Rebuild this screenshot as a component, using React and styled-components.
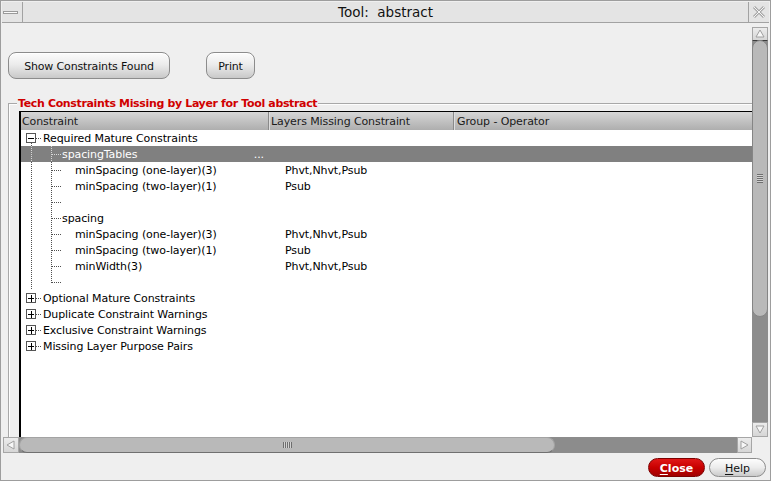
import styled, { createGlobalStyle } from 'styled-components';

// ======================
// global
// ======================
const Global = createGlobalStyle`
    body { margin: 0; background: #efefef; }
`;

const FONT = `"DejaVu Sans", "Liberation Sans", sans-serif`;

// ======================
// window frame
// ======================
const Window = styled.div`
    width: 771px;
    height: 481px;
    box-sizing: border-box;
    border: 1px solid #9d9d9d;
    padding: 1px;
    background: #efefef;
    display: flex;
    flex-direction: column;
    font-family: ${FONT};
    font-size: 11px;
    letter-spacing: -0.1px;
    color: #000;
`;

const TitleBar = styled.div`
    height: 20px;
    flex: none;
    display: flex;
    align-items: center;
    background: #e4e4e4;
    border-bottom: 1px solid #a2a2a2;
`;

const MinBox = styled.div`
    width: 21px;
    height: 20px;
    box-sizing: border-box;
    border-right: 1px solid #a2a2a2;
    display: flex;
    align-items: center;
    padding-left: 1px;

    &::after {
        content: '';
        width: 13px;
        height: 1px;
        border: 1px solid #9a9a9a;
        background: #fafafa;
    }
`;

const TitleText = styled.div`
    flex: 1;
    text-align: center;
    font-size: 13.5px;
    letter-spacing: 0;
    white-space: pre;
    color: #111;
`;

const CloseBox = styled.div`
    width: 21px;
    height: 20px;
    box-sizing: border-box;
    border-left: 1px solid #a2a2a2;
    display: flex;
    align-items: center;
    justify-content: center;
`;

// ======================
// main area
// ======================
const Main = styled.div`
    flex: 1;
    min-height: 0;
    display: flex;
`;

const LeftCol = styled.div`
    flex: 1;
    display: flex;
    flex-direction: column;
`;

const RightCol = styled.div`
    width: 16px;
    margin-right: 1px;
    padding-top: 4px;
    display: flex;
    flex-direction: column;
`;

const ButtonRow = styled.div`
    display: flex;
    gap: 36px;
    padding: 29px 0 0 6px;
`;

const PushButton = styled.button`
    width: ${p => p.$w}px;
    height: 27px;
    padding: 2px 0 0;
    border: 1px solid #8c8c8c;
    border-radius: 8px;
    background: linear-gradient(#fcfcfc 0%, #ececec 45%, #c9c9c9 100%);
    box-shadow: inset 0 1px 0 #fff;
    font-family: ${FONT};
    font-size: 11px;
    letter-spacing: -0.15px;
    color: #111;
`;

const GroupBox = styled.div`
    flex: 1;
    min-height: 0;
    margin: 24px 0 0 6px;
    padding: 7px 0 0 10px;
    border-top: 1px solid #a8a8a8;
    border-left: 1px solid #a8a8a8;
    box-shadow: inset 1px 1px 0 #fdfdfd;
    position: relative;
    display: flex;
    flex-direction: column;
`;

const Legend = styled.div`
    position: absolute;
    top: -7px;
    left: 8px;
    padding: 0 1px;
    line-height: 13px;
    background: #efefef;
    color: #d00000;
    font-weight: bold;
    font-size: 11px;
    letter-spacing: -0.35px;
`;

// ======================
// table
// ======================
const COLS = '247px 185px 1fr';

const Table = styled.div`
    flex: 1;
    background: #fff;
    border-top: 1px solid #000;
    border-left: 2px solid #000;
    display: flex;
    flex-direction: column;
    overflow: hidden;
`;

const Header = styled.div`
    display: grid;
    grid-template-columns: ${COLS};
    height: 18px;
    flex: none;
    background: linear-gradient(#d6d6d6, #aeaeae);
`;

const HeaderCell = styled.div`
    line-height: 20px;
    height: 18px;
    padding-left: ${p => p.$pad}px;
    color: #1a1a1a;
    white-space: nowrap;
    ${p => p.$sep && `
        border-left: 1px solid #8a8a8a;
        box-shadow: inset 1px 0 0 #dedede;
    `}
`;

const TreeBody = styled.div`
    position: relative;
    flex: 1;
`;

const Row = styled.div`
    display: grid;
    grid-template-columns: ${COLS};
    height: 16px;
    line-height: 18px;
    white-space: nowrap;
    background: ${p => (p.$selected ? '#808080' : 'transparent')};
    color: ${p => (p.$selected ? '#fff' : '#000')};
`;

const NameCell = styled.div`
    display: flex;
    height: 16px;
    padding-left: ${p => p.$indent}px;
`;

const Ellipsis = styled.span`
    margin-left: auto;
    padding-right: 4px;
`;

const LayerCell = styled.div`
    height: 16px;
    padding-left: 17px;
`;

const Guides = styled.svg`
    position: absolute;
    top: 0;
    left: 0;
    pointer-events: none;
`;

// ======================
// scrollbars
// ======================
const HScroll = styled.div`
    height: 16px;
    flex: none;
    margin-left: 1px;
    display: flex;
    background: #8c8c8c;
`;

const VScroll = styled.div`
    height: 410px;
    display: flex;
    flex-direction: column;
    background: #8c8c8c;
`;

const ArrowBox = styled.div`
    flex: none;
    width: ${p => p.$w}px;
    height: ${p => p.$h}px;
    box-sizing: border-box;
    background: linear-gradient(#ececec, #d6d6d6);
    border: 1px solid #a6a6a6;
    ${p => p.$edge && `border-${p.$edge}: 1px solid #3c3c3c;`}
    display: flex;
    align-items: center;
    justify-content: center;
`;

const Trough = styled.div`
    flex: 1;
`;

const VThumb = styled.div`
    height: 277px;
    flex: none;
    box-sizing: border-box;
    background: #b9b9b9;
    border: 1px solid #858585;
    border-radius: 8px;
    display: flex;
    align-items: center;
    justify-content: center;
    margin-top: -1px;
`;

const HThumb = styled.div`
    width: 536px;
    flex: none;
    box-sizing: border-box;
    background: #b9b9b9;
    border: 1px solid #a3a3a3;
    border-bottom-color: #707070;
    border-radius: 8px;
    display: flex;
    align-items: center;
    justify-content: center;
`;

const Grip = styled.div`
    width: ${p => (p.$vertical ? 6 : 9)}px;
    height: ${p => (p.$vertical ? 9 : 6)}px;
    background: repeating-linear-gradient(
        ${p => (p.$vertical ? '180deg' : '90deg')},
        #6e6e6e 0 1px,
        #d2d2d2 1px 2px
    );
`;

// ======================
// footer
// ======================
const Footer = styled.div`
    height: 26px;
    flex: none;
    display: flex;
    justify-content: flex-end;
    align-items: flex-start;
    gap: 4px;
    padding: 5px 3px 0 0;
    box-sizing: border-box;
`;

const DialogButton = styled.button`
    width: 57px;
    height: 19px;
    padding: 1px 0 0;
    border-radius: 10px;
    font-family: ${FONT};
    font-size: 11px;
    letter-spacing: 0;
    border: 1px solid ${p => (p.$primary ? '#7c0000' : '#8c8c8c')};
    background: ${p => (p.$primary
        ? 'linear-gradient(#e01818, #c80000 50%, #a00000)'
        : 'linear-gradient(#fdfdfd, #ececec 50%, #cacaca)')};
    color: ${p => (p.$primary ? '#fff' : '#111')};
    font-weight: ${p => (p.$primary ? 'bold' : 'normal')};

    u { text-decoration-thickness: 1px; text-underline-offset: 2px; }
`;

// ======================
// drawings
// ======================
const Triangle = ({ dir }) => {
    const pts = {
        up: '5,1 1,8 9,8',
        down: '1,1 9,1 5,8',
        left: '8,1 8,9 1,5',
        right: '1,1 1,9 8,5',
    }[dir];
    return (
        <svg width="10" height="10" viewBox="0 0 10 10">
            <polygon points={pts} fill="#f7f7f7" stroke="#a0a0a0" strokeWidth="1" />
        </svg>
    );
};

const CloseGlyph = () => (
    <svg width="14" height="14" viewBox="0 0 14 14">
        <path d="M2 2 L12 12 M12 2 L2 12" stroke="#a8a8a8" strokeWidth="3" />
        <path d="M2 2 L12 12 M12 2 L2 12" stroke="#f4f4f4" strokeWidth="1" />
    </svg>
);

// tree connector lines, relative to the tree body
const DARK = '#505050';
const LIGHT = '#d8d8d8';
const SEL = [16, 32];

function vline(x, y1, y2, key) {
    // split around selected row so the dots read light on grey
    const parts = [];
    const segs = [[y1, Math.min(y2, SEL[0]), DARK], [Math.max(y1, SEL[0]), Math.min(y2, SEL[1]), LIGHT], [Math.max(y1, SEL[1]), y2, DARK]];
    segs.forEach(([a, b, c], i) => {
        if (b > a) parts.push(<line key={`${key}-${i}`} x1={x} y1={a} x2={x} y2={b} stroke={c} strokeDasharray="1 1" />);
    });
    return parts;
}

const ExpandBox = ({ cy, open }) => (
    <g>
        <rect x="5.5" y={cy - 4.5} width="9" height="9" fill="#fff" stroke="#555" />
        <line x1="7" y1={cy + 0.5} x2="13" y2={cy + 0.5} stroke="#000" />
        {!open && <line x1="10.5" y1={cy - 3} x2="10.5" y2={cy + 4} stroke="#000" />}
        <line x1="15" y1={cy + 0.5} x2="21" y2={cy + 0.5} stroke={DARK} strokeDasharray="1 1" />
    </g>
);

const TreeGuides = () => {
    const branches = [1, 2, 3, 4, 5, 6, 7, 8, 9];
    return (
        <Guides width="70" height="240">
            <ExpandBox cy={8} open />
            {vline(10.5, 13, 160, 'a')}
            {vline(30.5, 16, 153, 'b')}
            {branches.map(i => (
                <line
                    key={i}
                    x1="31"
                    y1={16 * i + 8.5}
                    x2={i === 1 ? 41 : 40}
                    y2={16 * i + 8.5}
                    stroke={i === 1 ? LIGHT : DARK}
                    strokeDasharray="1 1"
                />
            ))}
            {[10, 11, 12, 13].map(i => <ExpandBox key={i} cy={16 * i + 8} />)}
        </Guides>
    );
};

// ======================
// data
// ======================
const rows = [
    { depth: 0, name: 'Required Mature Constraints' },
    { depth: 1, name: 'spacingTables', selected: true },
    { depth: 2, name: 'minSpacing (one-layer)(3)', layers: 'Phvt,Nhvt,Psub' },
    { depth: 2, name: 'minSpacing (two-layer)(1)', layers: 'Psub' },
    { depth: 2, name: '' },
    { depth: 1, name: 'spacing' },
    { depth: 2, name: 'minSpacing (one-layer)(3)', layers: 'Phvt,Nhvt,Psub' },
    { depth: 2, name: 'minSpacing (two-layer)(1)', layers: 'Psub' },
    { depth: 2, name: 'minWidth(3)', layers: 'Phvt,Nhvt,Psub' },
    { depth: 2, name: '' },
    { depth: 0, name: 'Optional Mature Constraints' },
    { depth: 0, name: 'Duplicate Constraint Warnings' },
    { depth: 0, name: 'Exclusive Constraint Warnings' },
    { depth: 0, name: 'Missing Layer Purpose Pairs' },
];

const INDENT = [22, 41, 54];

export default function App() {
    return (
        <>
            <Global />
            <Window>
                <TitleBar>
                    <MinBox />
                    <TitleText>{'Tool:  abstract'}</TitleText>
                    <CloseBox>
                        <CloseGlyph />
                    </CloseBox>
                </TitleBar>

                <Main>
                    <LeftCol>
                        <ButtonRow>
                            <PushButton $w={162}>Show Constraints Found</PushButton>
                            <PushButton $w={49}>Print</PushButton>
                        </ButtonRow>

                        <GroupBox>
                            <Legend>Tech Constraints Missing by Layer for Tool abstract</Legend>
                            <Table>
                                <Header>
                                    <HeaderCell $pad={1}>Constraint</HeaderCell>
                                    <HeaderCell $pad={2} $sep>Layers Missing Constraint</HeaderCell>
                                    <HeaderCell $pad={3} $sep>Group - Operator</HeaderCell>
                                </Header>
                                <TreeBody>
                                    {rows.map((r, i) => (
                                        <Row key={i} $selected={r.selected}>
                                            <NameCell $indent={INDENT[r.depth]}>
                                                {r.name}
                                                {r.selected && <Ellipsis>...</Ellipsis>}
                                            </NameCell>
                                            <LayerCell>{r.layers}</LayerCell>
                                            <div />
                                        </Row>
                                    ))}
                                    <TreeGuides />
                                </TreeBody>
                            </Table>
                        </GroupBox>

                        <HScroll>
                            <ArrowBox $w={16} $h={16}><Triangle dir="left" /></ArrowBox>
                            <HThumb><Grip /></HThumb>
                            <Trough />
                            <ArrowBox $w={15} $h={16}><Triangle dir="right" /></ArrowBox>
                        </HScroll>
                    </LeftCol>

                    <RightCol>
                        <VScroll>
                            <ArrowBox $w={16} $h={14} $edge="bottom"><Triangle dir="up" /></ArrowBox>
                            <VThumb><Grip $vertical /></VThumb>
                            <Trough />
                            <ArrowBox $w={16} $h={15}><Triangle dir="down" /></ArrowBox>
                        </VScroll>
                    </RightCol>
                </Main>

                <Footer>
                    <DialogButton $primary><u>C</u>lose</DialogButton>
                    <DialogButton><u>H</u>elp</DialogButton>
                </Footer>
            </Window>
        </>
    );
}
